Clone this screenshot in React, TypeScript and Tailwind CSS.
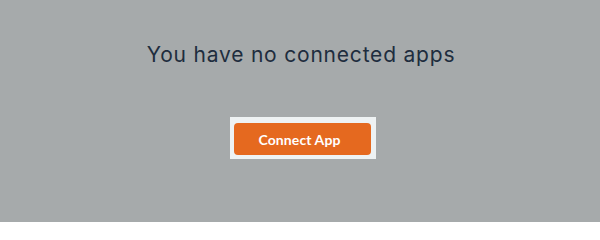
import React from "react";

export default function App() {
  return (
    <div
      className="flex h-[222px] w-full flex-col items-center bg-[#a6aaab] pt-[42px]"
      style={{ fontFamily: "Lato, 'Open Sans', sans-serif" }}
    >
      <h1
        className="ml-[2px] text-[21px] leading-[26px] tracking-[0.8px] text-[#1e2d3e]"
        style={{ fontFamily: "Inter, Lato, sans-serif" }}
      >
        You have no connected apps
      </h1>
      <div className="mt-[49px] ml-[6px] bg-[#eef2f3] pt-[6px] pb-[4px] pl-[4px] pr-[5px]">
        <button className="flex h-[32px] w-[137px] items-center justify-center rounded-[4px] bg-[#e5691f] pr-[6px] text-[14px] font-bold tracking-[0.1px] text-white">
          Connect App
        </button>
      </div>
    </div>
  );
}
